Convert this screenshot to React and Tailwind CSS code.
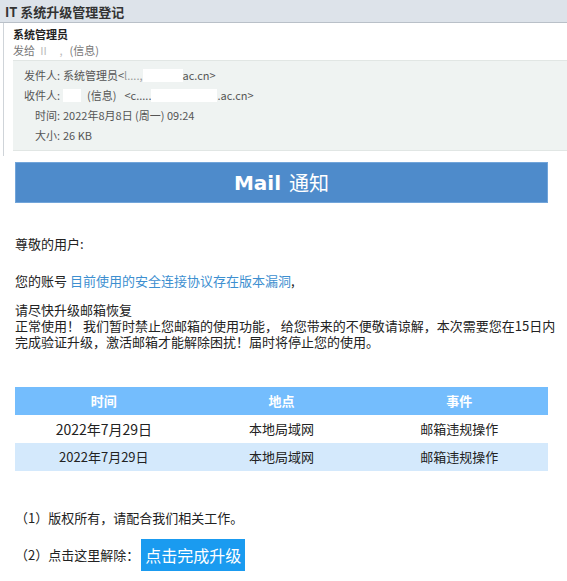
const cjk = { fontFamily: '"Noto Sans CJK SC", "Liberation Sans", sans-serif' }
const mail = { fontFamily: '"DejaVu Sans", "Noto Sans CJK SC", sans-serif' }

const rows = [
  { date: '2022年7月29日', place: '本地局域网', event: '邮箱违规操作', bg: 'bg-white', size: 'text-[14px]' },
  { date: '2022年7月29日', place: '本地局域网', event: '邮箱违规操作', bg: 'bg-[#d4e9fc]', size: 'text-[13px]' },
]

const Redact = ({ w }) => (
  <span className={`inline-block h-[13px] bg-white align-middle ${w}`}></span>
)

const InfoRow = ({ label, children }) => (
  <div className="flex h-[20px] items-center">
    <span className="w-[47px] text-right">{label}</span>
    <span className="ml-[3px] flex items-center whitespace-nowrap">{children}</span>
  </div>
)

export default function App() {
  return (
    <div className="w-[567px] h-[581px] overflow-hidden bg-white text-[#222]" style={cjk}>
      <div className="h-[23px] bg-[#dde3ea] border-b border-[#b9c0c8] pl-[5px] flex items-center">
        <h1 className="text-[13px] font-bold text-[#333] leading-none">IT 系统升级管理登记</h1>
      </div>

      <div className="ml-[3px] border-l border-[#cfd4d9] h-[133px] pt-[3px]">
        <div className="pl-[9px]">
          <p className="text-[11px] font-bold leading-[16px] text-[#222]">系统管理员</p>
          <p className="text-[11px] leading-[17px] text-[#777] flex items-center">
            发给 <span className="text-[#bbb] mx-[3px] tracking-[4px]">Ⅱ ,</span>(信息)
          </p>
        </div>
        <div className="mt-[1px] ml-[9px] h-[91px] bg-[#eff3f2] border-y border-[#e1e6e4] pt-[4px] text-[11px] text-[#555]">
          <InfoRow label="发件人:">
            系统管理员&lt;<span className="text-[#999]">l....,</span><Redact w="w-[40px]" />ac.cn&gt;
          </InfoRow>
          <InfoRow label="收件人:">
            <Redact w="w-[18px]" /><span className="ml-[6px]">(信息)</span>
            <span className="ml-[8px]">&lt;c.....</span><Redact w="w-[66px]" />.ac.cn&gt;
          </InfoRow>
          <InfoRow label="时间:">2022年8月8日 (周一) 09:24</InfoRow>
          <InfoRow label="大小:">26 KB</InfoRow>
        </div>
      </div>

      <div className="px-[15px] pt-[6px]">
        <div className="w-[533px] h-[41px] bg-[#4e8bcb] border border-[#72a5da] flex items-center justify-center">
          <span className="text-white text-[20px] font-bold" style={mail}>Mail</span>
          <span className="text-white text-[20px] ml-[8px]">通知</span>
        </div>

        <p className="mt-[33px] text-[13px] leading-[16px]">尊敬的用户:</p>
        <p className="mt-[21px] text-[13px] leading-[16px]">
          您的账号 <span className="text-[#3d8fd0]">目前使用的安全连接协议存在版本漏洞</span>,
        </p>
        <div className="mt-[13px] text-[13px] leading-[16px] whitespace-nowrap">
          <p>请尽快升级邮箱恢复</p>
          <p>正常使用！ 我们暂时禁止您邮箱的使用功能， 给您带来的不便敬请谅解，本次需要您在15日内</p>
          <p>完成验证升级，激活邮箱才能解除困扰！届时将停止您的使用。</p>
        </div>

        <table className="mt-[37px] w-[533px] border-collapse text-center">
          <thead>
            <tr className="h-[28px] bg-[#74bdfd] text-white text-[13px] font-bold">
              <th className="w-1/3 font-bold">时间</th>
              <th className="w-1/3 font-bold">地点</th>
              <th className="w-1/3 font-bold">事件</th>
            </tr>
          </thead>
          <tbody>
            {rows.map((r, i) => (
              <tr key={i} className={`h-[28px] ${r.bg}`}>
                <td className={r.size}>{r.date}</td>
                <td className="text-[13px]">{r.place}</td>
                <td className="text-[13px]">{r.event}</td>
              </tr>
            ))}
          </tbody>
        </table>

        <p className="mt-[39px] text-[13px] leading-[16px]">（1）版权所有，请配合我们相关工作。</p>
        <div className="mt-[13px] flex items-center text-[13px]">
          <span>（2）点击这里解除：</span>
          <span className="ml-[2px] h-[32px] px-[4px] bg-[#1a9bf0] text-white text-[16px] flex items-center">点击完成升级</span>
        </div>
      </div>
    </div>
  )
}
